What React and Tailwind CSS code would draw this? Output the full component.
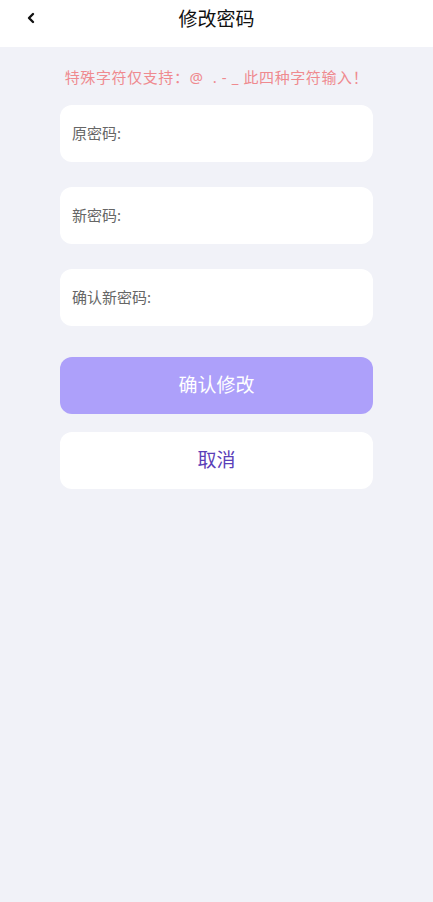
export default function App() {
  const font = { fontFamily: '"Noto Sans", "Noto Sans CJK SC", sans-serif' };
  return (
    <div className="w-[433px] h-[902px] bg-[#f1f2f8] flex flex-col" style={font}>
      <div className="h-[47px] bg-white flex items-center relative shrink-0">
        <div className="absolute left-[24px] top-[9px] w-[14px] h-[18px] flex items-center justify-center">
          <svg width="10" height="12" viewBox="0 0 10 12">
            <path d="M7 2 L3 6 L7 10" fill="none" stroke="#111" strokeWidth="2.4" strokeLinecap="round" strokeLinejoin="round" />
          </svg>
        </div>
        <div className="w-full text-center text-[19px] text-[#111] leading-none -mt-[9px]">修改密码</div>
      </div>
      <div className="text-center text-[15px] text-[#ef8a8f] mt-[18px] leading-[24px] tracking-[0.6px]">特殊字符仅支持：@ &nbsp;. - _ 此四种字符输入！</div>
      <div className="flex flex-col gap-[25px] px-[60px] mt-[16px]">
        {['原密码:', '新密码:', '确认新密码:'].map((t) => (
          <div key={t} className="h-[57px] bg-white rounded-[12px] flex items-center px-[12px] text-[15px] text-[#666]">{t}</div>
        ))}
      </div>
      <div className="px-[60px] mt-[31px] flex flex-col gap-[18px]">
        <div className="h-[57px] rounded-[12px] bg-[#ada0fa] flex items-center justify-center text-white text-[19px]">确认修改</div>
        <div className="h-[57px] rounded-[12px] bg-white flex items-center justify-center text-[#5b40b8] text-[19px]">取消</div>
      </div>
    </div>
  );
}
